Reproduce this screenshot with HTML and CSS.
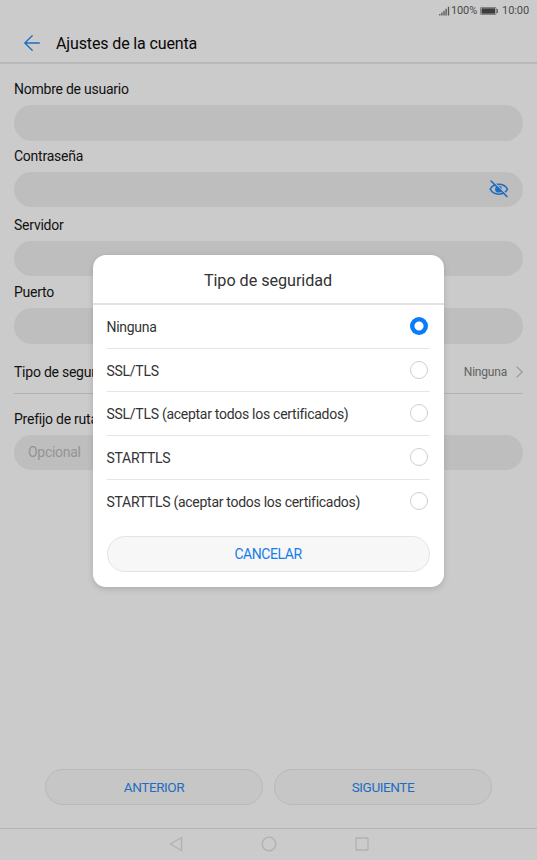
FILE: index.html
```html
<!DOCTYPE html>
<html lang="es">
<head>
    <meta charset="UTF-8">
    <meta name="viewport" content="width=device-width, initial-scale=1.0">
    <title>Ajustes de la cuenta</title>
    <link rel="stylesheet" href="styles.css">
</head>
<body>
    <div class="status-bar">
        <svg class="signal" width="11" height="10" viewBox="0 0 11 10">
            <path d="M.8 8v1.5M2.9 6.5v3M5 4.8v4.7M7.1 2.8v6.7M9.5.7v8.8" stroke="#555" stroke-width="1.3" fill="none"/>
        </svg>
        <span class="percent">100%</span>
        <svg class="battery" width="18" height="8" viewBox="0 0 18 8">
            <rect x=".4" y=".4" width="15.6" height="7.2" rx="1" fill="none" stroke="#666" stroke-width=".8"/>
            <rect x="1.5" y="1.3" width="13.5" height="5.4" fill="#3c3c3c"/>
            <path d="M17.2 2v4" stroke="#555" stroke-width="1.2"/>
        </svg>
        <span class="clock">10:00</span>
    </div>

    <header class="header">
        <svg width="16" height="16" viewBox="0 0 16 16" fill="none" stroke="#1f6dc0" stroke-width="1.3" stroke-linecap="round" stroke-linejoin="round">
            <path d="M15.3 8H.8M8.2.8L.8 8l7.4 7.2"/>
        </svg>
        <h1>Ajustes de la cuenta</h1>
    </header>

    <main class="form">
        <div class="field">
            <label>Nombre de usuario</label>
            <div class="input"></div>
        </div>
        <div class="field field-password">
            <label>Contraseña</label>
            <div class="input">
                <svg width="20" height="18" viewBox="0 0 20 18" fill="none" stroke="#1f6dc0" stroke-width="1.5">
                    <path d="M1.2 9.2C3 5.8 6.2 4.2 9.8 4.2s6.9 1.6 8.7 5c-1.8 3.4-5.1 5-8.7 5s-6.8-1.6-8.6-5z"/>
                    <circle cx="9.5" cy="9.2" r="3.4" fill="#1f6dc0" stroke="none"/>
                    <path d="M3.1.5l16 15.6" stroke="#bebebe" stroke-width="1.2"/>
                    <path d="M2 1l16 15.6" stroke-linecap="round"/>
                </svg>
            </div>
        </div>
        <div class="field field-server">
            <label>Servidor</label>
            <div class="input"></div>
        </div>
        <div class="field field-port">
            <label>Puerto</label>
            <div class="input"></div>
        </div>
        <div class="setting">
            <span>Tipo de seguridad</span>
            <span class="setting-value">Ninguna</span>
            <svg width="7" height="12" viewBox="0 0 7 12" fill="none" stroke="#989898" stroke-width="1.2">
                <path d="M.6.6L6.2 6 .6 11.4"/>
            </svg>
        </div>
        <div class="field field-prefix">
            <label>Prefijo de ruta</label>
            <div class="input">Opcional</div>
        </div>
    </main>

    <div class="actions">
        <button class="btn">ANTERIOR</button>
        <button class="btn">SIGUIENTE</button>
    </div>

    <nav class="nav-bar">
        <svg width="14" height="16" viewBox="0 0 14 16"><path d="M12.5 1.5v13L1.2 8z"/></svg>
        <svg width="16" height="16" viewBox="0 0 16 16"><circle cx="8" cy="8" r="6.8"/></svg>
        <svg width="14" height="16" viewBox="0 0 14 16"><rect x="1" y="2" width="12" height="12" rx=".5"/></svg>
    </nav>

    <!-- Security type dialog -->
    <div class="dialog">
        <h2>Tipo de seguridad</h2>
        <ul>
            <li>Ninguna <span class="radio checked"></span></li>
            <li>SSL/TLS <span class="radio"></span></li>
            <li>SSL/TLS (aceptar todos los certificados) <span class="radio"></span></li>
            <li>STARTTLS <span class="radio"></span></li>
            <li>STARTTLS (aceptar todos los certificados) <span class="radio"></span></li>
        </ul>
        <button class="btn btn-cancel">CANCELAR</button>
    </div>
</body>
</html>
```

FILE: styles.css
```css
* {
    margin: 0;
    padding: 0;
    box-sizing: border-box;
}

body {
    display: flex;
    flex-direction: column;
    height: 860px;
    overflow: hidden;
    background-color: #cbcbcb;
    color: #111;
    font-family: Roboto, sans-serif;
    font-size: 14px;
    letter-spacing: -0.24px;
}

svg {
    display: block;
    flex: none;
}

/* Status bar */
.status-bar {
    display: flex;
    align-items: center;
    justify-content: flex-end;
    height: 21px;
    padding-right: 8px;
    font-size: 11px;
    letter-spacing: -0.1px;
    color: #4a4a4a;
}

.percent {
    margin: 0 3px 0 1px;
}

.clock {
    margin-left: 4px;
}

/* Header */
.header {
    display: flex;
    align-items: center;
    gap: 16px;
    height: 43px;
    padding: 3px 0 0 24px;
    border-bottom: 2px solid #b9b9b9;
}

.header h1 {
    font-size: 16px;
    font-weight: 400;
    letter-spacing: -0.13px;
    color: #080808;
}

/* Form */
.form {
    flex: 1;
    padding: 15px 14px 0;
}

.field {
    margin-bottom: 6px;
}

.field:first-child {
    margin-bottom: 5px;
}

.field label {
    display: block;
    height: 26px;
    line-height: 20px;
}

.input {
    display: flex;
    align-items: center;
    height: 35.5px;
    padding: 0 14px;
    border-radius: 18px;
    background-color: #bebebe;
    color: #949494;
    letter-spacing: -0.28px;
}

.field-password .input {
    justify-content: flex-end;
}

.field-server {
    margin-top: 7.5px;
}

.field-port {
    margin-bottom: 0;
}

.setting {
    display: flex;
    align-items: center;
    height: 50px;
    padding-top: 7px;
    border-bottom: 1px solid #b3b3b3;
}

.setting-value {
    margin: 0 9px 0 auto;
    font-size: 12px;
    letter-spacing: -0.2px;
    color: #626262;
}

.field-prefix {
    padding-top: 15px;
}

/* Buttons */
.actions {
    display: flex;
    gap: 11px;
    padding: 0 45px 23px;
}

.btn {
    flex: 1;
    height: 36px;
    border: 1px solid #b9b9b9;
    border-radius: 18px;
    background-color: #c6c6c6;
    color: #1f6dc0;
    font-family: inherit;
    font-size: 13.6px;
    letter-spacing: -0.45px;
}

/* Navigation bar */
.nav-bar {
    display: flex;
    align-items: center;
    justify-content: center;
    gap: 78px;
    height: 32px;
    padding-bottom: 1px;
    border-top: 1px solid #b3b3b3;
}

.nav-bar svg {
    fill: none;
    stroke: #b1b1b1;
    stroke-width: 1.3;
}

/* Dialog */
.dialog {
    position: absolute;
    top: 255px;
    left: 92.5px;
    width: 351px;
    height: 331.5px;
    border-radius: 13px;
    background-color: #fff;
    box-shadow: 0 2px 6px rgba(0, 0, 0, 0.15);
    color: #333;
}

.dialog h2 {
    height: 50px;
    border-bottom: 2px solid #e2e2e2;
    font-size: 16.2px;
    font-weight: 400;
    letter-spacing: -0.05px;
    line-height: 51px;
    text-align: center;
}

.dialog ul {
    padding: 0 14px;
    list-style: none;
}

.dialog li {
    display: flex;
    align-items: center;
    justify-content: space-between;
    height: 43.7px;
    padding: 1px 2px 0 0;
    border-bottom: 1px solid #e6e6e6;
    letter-spacing: -0.28px;
}

.dialog li:last-child {
    border-bottom: none;
}

.radio {
    width: 18px;
    height: 18px;
    margin-top: -2px;
    border: 1px solid #cfcfcf;
    border-radius: 50%;
}

.radio.checked {
    border: none;
    background: radial-gradient(circle, #fff 4px, #0a7cfa 5px);
}

.btn-cancel {
    display: block;
    width: 323px;
    margin: 13px auto 0;
    border-color: #e3e3e3;
    background-color: #f7f7f7;
    color: #147ceb;
    font-size: 14px;
    letter-spacing: -0.45px;
}
```
